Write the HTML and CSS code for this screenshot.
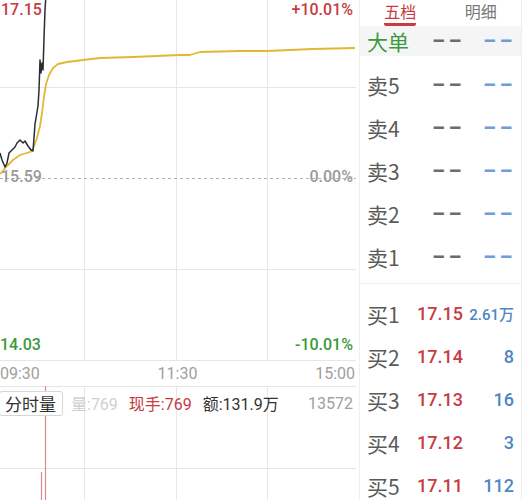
FILE: index.html
```html
<!DOCTYPE html>
<html lang="zh">
<head>
<meta charset="utf-8">
<title>分时</title>
<link rel="stylesheet" href="styles.css">
</head>
<body>
<div class="page">
  <div class="left">
    <div class="price-chart">
      <svg class="chart-svg" width="359" height="361" viewBox="0 0 359 361">
        <line class="grid" x1="0" y1="87.5" x2="356" y2="87.5"/>
        <line class="grid" x1="0" y1="269.5" x2="356" y2="269.5"/>
        <line class="grid" x1="0" y1="360.5" x2="356" y2="360.5"/>
        <line class="grid" x1="84.5" y1="0" x2="84.5" y2="361"/>
        <line class="grid" x1="176.5" y1="0" x2="176.5" y2="361"/>
        <line class="grid" x1="267.5" y1="0" x2="267.5" y2="361"/>
        <line class="mid" x1="0" y1="178.5" x2="356" y2="178.5"/>
        <polyline class="avg" points="0,174 7,166 13,160 20,155 30,152 33,149 37,138 40,126 42,113 44,97 46,84 49,75 53,68 58,64 67,62 83,60 100,58 133,57 180,55 190,55 200,52 240,51 267,51 313,49 355,48"/>
        <polyline class="price" points="0,153 2,160 5,167 7,163 9,153 12,150 15,147 17,143 20,140 23,143 25,141 28,146 31,150 33,151 35,124 37,112 38,106 39,90 40,60 41,73 42,63 43,70 44,38 45,10 46,-5"/>
      </svg>
      <span class="lbl tl red">17.15</span>
      <span class="lbl tr red">+10.01%</span>
      <span class="lbl ml gray">15.59</span>
      <span class="lbl mr gray">0.00%</span>
      <span class="lbl bl green">14.03</span>
      <span class="lbl br green">-10.01%</span>
    </div>
    <div class="time-row">
      <span>09:30</span>
      <span>11:30</span>
      <span>15:00</span>
    </div>
    <div class="vol">
      <svg class="vol-svg" width="359" height="114" viewBox="0 0 359 114">
        <line class="grid" x1="0" y1="0.5" x2="356" y2="0.5"/>
        <line class="grid" x1="0" y1="82.5" x2="356" y2="82.5"/>
        <line class="grid" x1="84.5" y1="0" x2="84.5" y2="114"/>
        <line class="grid" x1="176.5" y1="0" x2="176.5" y2="114"/>
        <line class="grid" x1="267.5" y1="0" x2="267.5" y2="114"/>
        <line class="bar" x1="45.5" y1="0" x2="45.5" y2="114"/>
        <line class="bar" x1="41.5" y1="86" x2="41.5" y2="114"/>
      </svg>
      <div class="vol-head">
        <span class="vol-tab">分时量</span>
        <span class="muted">量:769</span>
        <span class="red">现手:769</span>
        <span class="dark">额:131.9万</span>
        <span class="vol-max">13572</span>
      </div>
    </div>
  </div>
  <div class="book">
    <div class="tabs">
      <div class="tab active"><span>五档</span></div>
      <div class="tab"><span>明细</span></div>
    </div>
    <div class="row big">
      <span class="name green">大单</span>
      <span class="price"><span class="dash">--</span></span>
      <span class="qty"><span class="dash blue-dash">--</span></span>
    </div>
    <div class="sells">
      <div class="row"><span class="name">卖5</span><span class="price"><span class="dash">--</span></span><span class="qty"><span class="dash blue-dash">--</span></span></div>
      <div class="row"><span class="name">卖4</span><span class="price"><span class="dash">--</span></span><span class="qty"><span class="dash blue-dash">--</span></span></div>
      <div class="row"><span class="name">卖3</span><span class="price"><span class="dash">--</span></span><span class="qty"><span class="dash blue-dash">--</span></span></div>
      <div class="row"><span class="name">卖2</span><span class="price"><span class="dash">--</span></span><span class="qty"><span class="dash blue-dash">--</span></span></div>
      <div class="row"><span class="name">卖1</span><span class="price"><span class="dash">--</span></span><span class="qty"><span class="dash blue-dash">--</span></span></div>
    </div>
    <div class="buys">
      <div class="row"><span class="name">买1</span><span class="price num">17.15</span><span class="qty num small">2.61万</span></div>
      <div class="row"><span class="name">买2</span><span class="price num">17.14</span><span class="qty num">8</span></div>
      <div class="row"><span class="name">买3</span><span class="price num">17.13</span><span class="qty num">16</span></div>
      <div class="row"><span class="name">买4</span><span class="price num">17.12</span><span class="qty num">3</span></div>
      <div class="row"><span class="name">买5</span><span class="price num">17.11</span><span class="qty num">112</span></div>
    </div>
  </div>
</div>
</body>
</html>
```
FILE: styles.css
```css
* { box-sizing: border-box; }

html, body {
  margin: 0;
  padding: 0;
  background: #fff;
}

body {
  font-family: Roboto, "Noto Sans CJK SC", sans-serif;
  color: #333;
  width: 530px;
  height: 500px;
  overflow: hidden;
}

.page {
  display: flex;
  height: 500px;
}

.left {
  width: 359px;
  flex: none;
  display: flex;
  flex-direction: column;
}

.price-chart {
  position: relative;
  height: 361px;
}

.chart-svg, .vol-svg {
  position: absolute;
  left: 0;
  top: 0;
  display: block;
}

.grid {
  stroke: #e6e6e6;
  stroke-width: 1;
}

.mid {
  stroke: #b4b4b4;
  stroke-width: 1;
  stroke-dasharray: 3 3;
}

.avg {
  fill: none;
  stroke: #e2b833;
  stroke-width: 1.8;
  stroke-linejoin: round;
}

.price {
  fill: none;
}

polyline.price {
  stroke: #2c2c36;
  stroke-width: 1.5;
  stroke-linejoin: round;
}

.bar {
  stroke: #d98a8a;
  stroke-width: 1.2;
}

.lbl {
  position: absolute;
  font-size: 16px;
  line-height: 18px;
  font-weight: 500;
}

.tl { left: 1px; top: 1px; }
.tr { right: 6px; top: 1px; }
.ml { left: 1px; top: 168px; }
.mr { right: 6px; top: 168px; }
.bl { left: 0; top: 336px; }
.br { right: 6px; top: 336px; }

.red { color: #c83b43; }
.green { color: #3a9a3c; }
.gray { color: #9a9a9a; }

.time-row {
  height: 25px;
  width: 355px;
  display: flex;
  justify-content: space-between;
  align-items: center;
  font-size: 16px;
  color: #a0a0a0;
}

.vol {
  position: relative;
  flex: 1;
}

.vol-head {
  position: relative;
  display: flex;
  align-items: center;
  height: 26px;
  margin-top: 4px;
  padding-right: 6px;
  font-size: 16px;
  white-space: nowrap;
}

.vol-tab {
  display: flex;
  align-items: center;
  height: 25px;
  padding: 0 6px 0 5px;
  border: 1px solid #d6d6d6;
  border-radius: 3px;
  background: #fff;
  color: #333;
  font-size: 17px;
  margin-left: -1px;
}

.muted { color: #d0d0d0; margin-left: 8px; }
.vol-head .red { margin-left: 11px; }
.dark { color: #333; margin-left: 11px; }
.vol-max { margin-left: auto; color: #a0a0a0; }

.book {
  width: 163px;
  flex: none;
  border-left: 1px solid #efefef;
  border-right: 1px solid #efefef;
  display: flex;
  flex-direction: column;
}

.tabs {
  display: flex;
  height: 28px;
}

.tab {
  flex: 1;
  display: flex;
  justify-content: center;
  font-size: 16px;
  color: #777;
}

.tab span {
  display: block;
  height: 26px;
  line-height: 25px;
}

.tab.active span {
  color: #c83b43;
  border-bottom: 3px solid #c83b43;
  border-radius: 0 0 2px 2px;
}

.row {
  display: grid;
  grid-template-columns: 40px 56px 51px;
  align-items: center;
  height: 43px;
  padding: 0 7px;
}

.row.big {
  height: 32px;
  background: #f5f5f5;
}

.name {
  font-family: "Noto Sans CJK SC", sans-serif;
  font-size: 21px;
  color: #5a5a5a;
  white-space: nowrap;
}

.name.green { color: #3a9a3c; }

.price, .qty {
  text-align: right;
  white-space: nowrap;
}

.dash {
  display: inline-block;
  font-size: 22px;
  line-height: 22px;
  letter-spacing: 1px;
  color: #6c6c6c;
  font-weight: 700;
  transform: scaleX(1.7);
  transform-origin: right center;
  margin-right: -1px;
}

.blue-dash { color: #6f9dd8; }

.sells {
  padding: 7px 0 5px;
  border-bottom: 1px solid #eeeeee;
}

.buys {
  padding-top: 8px;
}

.num {
  font-size: 18px;
  font-weight: 500;
}

.price.num { color: #c83b43; }
.qty.num { color: #4f86c4; }
.qty.small { font-size: 15px; }
```
